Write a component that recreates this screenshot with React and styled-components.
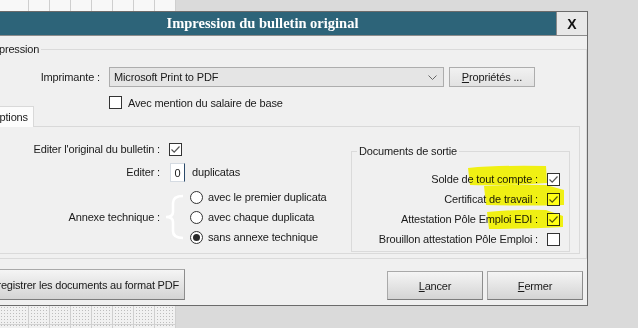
import React from "react";
import styled, { createGlobalStyle } from "styled-components";

const GlobalStyle = createGlobalStyle`
  html, body { margin: 0; padding: 0; }
  body {
    background: #dadada;
    font-family: "Liberation Sans", Arial, sans-serif;
    font-size: 11px;
    letter-spacing: -0.15px;
    color: #1a1a1a;
    overflow: hidden;
  }
`;

const Screen = styled.div`
  position: relative;
  width: 638px;
  height: 328px;
  overflow: hidden;
  display: flex;
  flex-direction: column;
`;

const Strip = styled.div`
  display: flex;
  height: ${p => p.h}px;
  flex-shrink: 0;
`;

const Cells = styled.div`
  width: 176px;
  height: 100%;
  background-color: ${p => (p.dotted ? "#f1f1f1" : "#f8f8f8")};
  background-image: repeating-linear-gradient(90deg, transparent 0 20px, #cfcfcf 20px 21px)
    ${p =>
      p.dotted
        ? ", linear-gradient(transparent 18px, #d2d2d2 18px 19px, transparent 19px), radial-gradient(circle, #bdbdbd 35%, transparent 45%)"
        : ""};
  background-position: 8px 0${p => (p.dotted ? ", 0 0, 0 0" : "")};
  background-size: auto${p => (p.dotted ? ", auto, 3px 3px" : "")};
`;

const Dialog = styled.div`
  margin-left: -63px;
  width: 651px;
  height: 295px;
  box-sizing: border-box;
  border: 1px solid #6b6b6b;
  background: #f0f0f0;
  display: flex;
  flex-direction: column;
  flex-shrink: 0;
`;

const TitleBar = styled.div`
  display: flex;
  height: 23px;
  background: #2d6479;
  border-bottom: 1px solid #8c8c8c;
`;

const Title = styled.div`
  flex: 1;
  padding-left: 31px;
  text-align: center;
  color: #fff;
  font-family: "Liberation Serif", "Times New Roman", serif;
  font-weight: bold;
  font-size: 14.5px;
  letter-spacing: 0;
  line-height: 23px;
`;

const CloseButton = styled.div`
  width: 30px;
  border-left: 1px solid #8a8a8a;
  background: #e8e8e8;
  display: flex;
  align-items: center;
  justify-content: center;
  font-weight: bold;
  font-size: 14px;
  letter-spacing: 0;
  color: #111;
`;

const Body = styled.div`
  flex: 1;
  display: flex;
  flex-direction: column;
  padding: 13px 0 5px 40px;
`;

const Group = styled.div`
  position: relative;
  border: 1px solid #dadada;
  padding: 17px 0 4px 21px;
  height: 210px;
  box-sizing: border-box;
`;

const Legend = styled.span`
  position: absolute;
  top: -7px;
  left: ${p => p.left}px;
  padding: 0 2px;
  background: #f0f0f0;
  line-height: 13px;
`;

const Row = styled.div`
  display: flex;
  align-items: center;
  height: ${p => p.h || 20}px;
  margin-top: ${p => p.mt || 0}px;
  margin-left: ${p => p.ml || 0}px;
`;

const Label = styled.span`
  width: ${p => p.w}px;
  flex-shrink: 0;
  text-align: right;
  margin-right: ${p => p.mr ?? 9}px;
  white-space: nowrap;
`;

const Select = styled.div`
  width: 335px;
  height: 20px;
  box-sizing: border-box;
  border: 1px solid #adadad;
  background: #e5e5e5;
  display: flex;
  align-items: center;
  justify-content: space-between;
  padding: 0 6px 0 4px;
`;

const SmallButton = styled.div`
  margin-left: 5px;
  width: 86px;
  height: 20px;
  box-sizing: border-box;
  border: 1px solid #adadad;
  background: linear-gradient(#f1f1f1, #e2e2e2);
  display: flex;
  align-items: center;
  justify-content: center;
`;

const U = styled.span`
  text-decoration: underline;
`;

const Box = styled.span`
  width: 13px;
  height: 13px;
  box-sizing: border-box;
  border: 1px solid #333;
  background: #fff;
  flex-shrink: 0;
  display: flex;
  align-items: center;
  justify-content: center;
  margin-right: ${p => p.mr || 0}px;
`;

const Checkbox = ({ checked, mr }) => (
  <Box mr={mr}>
    {checked && (
      <svg width="11" height="11" viewBox="0 0 11 11">
        <polyline points="1.5,5.5 4.2,8.2 9.5,2.5" fill="none" stroke="#555" strokeWidth="1.2" />
      </svg>
    )}
  </Box>
);

const Tabs = styled.div`
  margin-top: -3px;
  margin-left: -15px;
  width: 595px;
`;

const TabStrip = styled.div`
  display: flex;
  height: 21px;
`;

const Tab = styled.div`
  width: 49px;
  box-sizing: border-box;
  border: 1px solid #d9d9d9;
  border-bottom: none;
  background: #fcfcfc;
  display: flex;
  align-items: center;
  justify-content: center;
`;

const TabFiller = styled.div`
  flex: 1;
  border-bottom: 1px solid #d9d9d9;
`;

const TabPage = styled.div`
  height: 127px;
  box-sizing: border-box;
  border: 1px solid #dadada;
  border-top: none;
  display: flex;
`;

const LeftColumn = styled.div`
  padding-top: 12px;
  display: flex;
  flex-direction: column;
`;

const NumberInput = styled.div`
  width: 15px;
  height: 19px;
  box-sizing: border-box;
  margin: 1px 7px 0 1px;
  background: #fff;
  border: 1px solid #d5dbe2;
  border-right-color: #2b4a6a;
  display: flex;
  align-items: center;
  justify-content: center;
`;

const AnnexeRow = styled.div`
  display: flex;
  align-items: center;
  margin-top: 5px;
`;

const Brace = styled.svg`
  margin: 0 4px;
  flex-shrink: 0;
`;

const RadioList = styled.div`
  display: flex;
  flex-direction: column;
`;

const RadioRow = styled.div`
  display: flex;
  align-items: center;
  height: 20px;
`;

const Radio = styled.span`
  width: 13px;
  height: 13px;
  box-sizing: border-box;
  border: 1px solid #333;
  border-radius: 50%;
  background: #fff;
  margin-right: 5px;
  display: flex;
  align-items: center;
  justify-content: center;
  &::after {
    content: "";
    display: ${p => (p.on ? "block" : "none")};
    width: 7px;
    height: 7px;
    border-radius: 50%;
    background: #2a2a2a;
  }
`;

const Documents = styled.div`
  position: relative;
  margin: 24px 9px 0 auto;
  width: 219px;
  height: 101px;
  box-sizing: border-box;
  border: 1px solid #dadada;
  padding: 17px 9px 0 0;
`;

const DocRow = styled.div`
  display: flex;
  align-items: center;
  justify-content: flex-end;
  height: 20px;
`;

const ButtonRow = styled.div`
  display: flex;
  height: 31px;
  margin-top: 10px;
  padding-right: 4px;
`;

const LeftSlot = styled.div`
  width: 207px;
  display: flex;
  justify-content: flex-end;
  flex-shrink: 0;
`;

const BigButton = styled.div`
  width: ${p => p.w || "auto"};
  height: ${p => p.h}px;
  align-self: ${p => p.align || "flex-start"};
  margin-left: ${p => p.ml || 0}px;
  padding: 0 5px;
  box-sizing: border-box;
  border: 1px solid #a9a9a9;
  border-bottom-color: #7d7d7d;
  border-right-color: #8d8d8d;
  background: linear-gradient(#f5f5f5, #d4d4d4);
  display: flex;
  align-items: center;
  justify-content: center;
  white-space: nowrap;
  font-size: 11px;
  letter-spacing: -0.2px;
`;

const Spacer = styled.div`
  flex: 1;
`;

const Marker = styled.svg`
  position: absolute;
  left: 0;
  top: 0;
  pointer-events: none;
  mix-blend-mode: multiply;
`;

const docs = [
  { label: "Solde de tout compte :", checked: true },
  { label: "Certificat de travail :", checked: true },
  { label: "Attestation Pôle Emploi EDI :", checked: true },
  { label: "Brouillon attestation Pôle Emploi :", checked: false }
];

const annexes = [
  { label: "avec le premier duplicata", on: false },
  { label: "avec chaque duplicata", on: false },
  { label: "sans annexe technique", on: true }
];

export default function App() {
  return (
    <Screen>
      <GlobalStyle />
      <Strip h={11}>
        <Cells />
      </Strip>
      <Dialog>
        <TitleBar>
          <Title>Impression du bulletin original</Title>
          <CloseButton>X</CloseButton>
        </TitleBar>
        <Body>
          <Group>
            <Legend left={6}>Impression</Legend>
            <Row>
              <Label w={100}>Imprimante :</Label>
              <Select>
                <span>Microsoft Print to PDF</span>
                <svg width="9" height="5" viewBox="0 0 9 5">
                  <polyline points="0.5,0.5 4.5,4.5 8.5,0.5" fill="none" stroke="#666" strokeWidth="1" />
                </svg>
              </Select>
              <SmallButton>
                <span>
                  <U>P</U>ropriétés ...
                </span>
              </SmallButton>
            </Row>
            <Row h={13} mt={9} ml={109}>
              <Checkbox mr={6} />
              <span>Avec mention du salaire de base</span>
            </Row>
            <Tabs>
              <TabStrip>
                <Tab>Options</Tab>
                <TabFiller />
              </TabStrip>
              <TabPage>
                <LeftColumn>
                  <Row>
                    <Label w={174}>Editer l'original du bulletin :</Label>
                    <Checkbox checked />
                  </Row>
                  <Row mt={3}>
                    <Label w={174}>Editer :</Label>
                    <NumberInput>0</NumberInput>
                    <span>duplicatas</span>
                  </Row>
                  <AnnexeRow>
                    <Label w={174} mr={0}>
                      Annexe technique :
                    </Label>
                    <Brace width="22" height="46" viewBox="0 0 22 46">
                      <path
                        d="M19 2 C12 2 9 4 9 9 V18 C9 21 7 23 2 23 C7 23 9 25 9 28 V37 C9 42 12 44 19 44"
                        fill="none"
                        stroke="#fff"
                        strokeWidth="2.6"
                      />
                    </Brace>
                    <RadioList>
                      {annexes.map(a => (
                        <RadioRow key={a.label}>
                          <Radio on={a.on} />
                          <span>{a.label}</span>
                        </RadioRow>
                      ))}
                    </RadioList>
                  </AnnexeRow>
                </LeftColumn>
                <Documents>
                  <Legend left={5}>Documents de sortie</Legend>
                  {docs.map(d => (
                    <DocRow key={d.label}>
                      <Label w={200}>{d.label}</Label>
                      <Checkbox checked={d.checked} />
                    </DocRow>
                  ))}
                </Documents>
              </TabPage>
            </Tabs>
          </Group>
          <ButtonRow>
            <LeftSlot>
              <BigButton h={31}>Enregistrer les documents au format PDF</BigButton>
            </LeftSlot>
            <Spacer />
            <BigButton w="96px" h={29} align="flex-end">
              <span>
                <U>L</U>ancer
              </span>
            </BigButton>
            <BigButton w="96px" h={29} align="flex-end" ml={4}>
              <span>
                <U>F</U>ermer
              </span>
            </BigButton>
          </ButtonRow>
        </Body>
      </Dialog>
      <Strip h={22}>
        <Cells dotted />
      </Strip>
      <Marker width="638" height="328" viewBox="0 0 638 328">
        <g fill="#ffff00" opacity="0.92">
          <path d="M468 168 Q500 165 546 166 L547 183 Q505 186 470 185 Z" />
          <path d="M484 186 Q520 184 546 185 L564 190 L564 205 Q520 206 486 205 Z" />
          <path d="M487 212 Q520 209 546 210 L563 216 L563 227 Q520 229 489 229 Z" />
        </g>
      </Marker>
    </Screen>
  );
}
